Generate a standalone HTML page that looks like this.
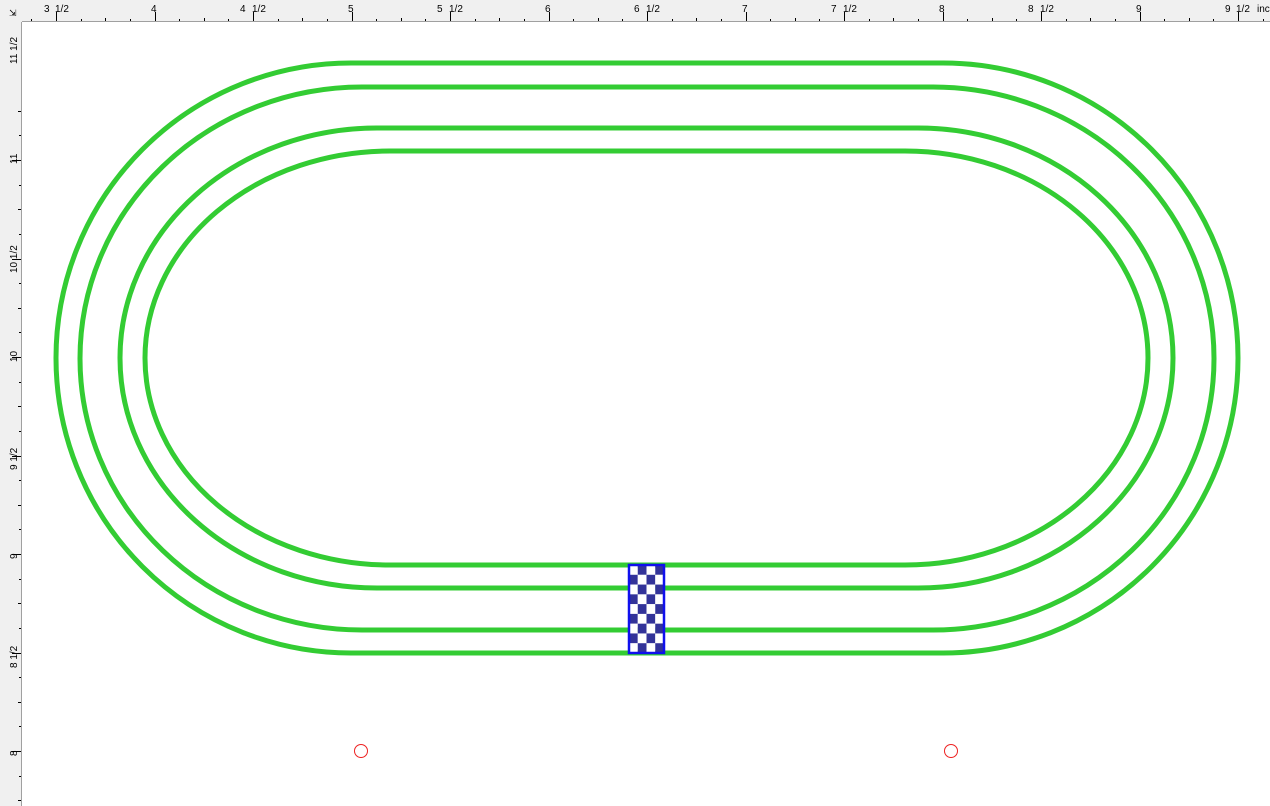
<!DOCTYPE html>
<html><head><meta charset="utf-8"><style>
html,body{margin:0;padding:0;width:1270px;height:806px;overflow:hidden;background:#fff;font-family:"Liberation Sans",sans-serif;}
svg{position:absolute;left:0;top:0}
</style></head><body>
<svg width="1270" height="806" viewBox="0 0 1270 806">
<rect x="0" y="0" width="1270" height="806" fill="#fff"/>
<!-- rulers -->
<rect x="0" y="0" width="1270" height="22" fill="#f0f0f0"/>
<rect x="0" y="0" width="22" height="806" fill="#f0f0f0"/>
<line x1="22" y1="21.5" x2="1270" y2="21.5" stroke="#a0a0a0"/>
<line x1="21.5" y1="22" x2="21.5" y2="806" stroke="#a0a0a0"/>
<g id="ticks" stroke="#000" stroke-width="1"></g>
<g font-size="10" fill="#000">
<text x="44" y="12">3</text><text x="55" y="12">1/2</text>
<text x="151" y="12">4</text>
<text x="240" y="12">4</text><text x="252" y="12">1/2</text>
<text x="348" y="12">5</text>
<text x="437" y="12">5</text><text x="449" y="12">1/2</text>
<text x="545" y="12">6</text>
<text x="634" y="12">6</text><text x="646" y="12">1/2</text>
<text x="742" y="12">7</text>
<text x="831" y="12">7</text><text x="843" y="12">1/2</text>
<text x="939" y="12">8</text>
<text x="1028" y="12">8</text><text x="1040" y="12">1/2</text>
<text x="1136" y="12">9</text>
<text x="1225" y="12">9</text><text x="1236" y="12">1/2</text>
<text x="1257" y="12">inc</text>
</g>
<g font-size="10" fill="#000">
<text transform="translate(17,64) rotate(-90)">11 1/2</text>
<text transform="translate(17,164) rotate(-90)">11</text>
<text transform="translate(17,273) rotate(-90)">10 1/2</text>
<text transform="translate(17,362) rotate(-90)">10</text>
<text transform="translate(17,470) rotate(-90)">9 1/2</text>
<text transform="translate(17,559) rotate(-90)">9</text>
<text transform="translate(17,668) rotate(-90)">8 1/2</text>
<text transform="translate(17,756) rotate(-90)">8</text>
</g>
<text x="9" y="16" font-size="9">⇲</text>
<!-- track -->
<g fill="none" stroke="#33cc33" stroke-width="5">
<path d="M351,63 H943 A295,295 0 0 1 943,653 H351 A295,295 0 0 1 351,63 Z"/>
<path d="M362,87 H933 A281,271.5 0 0 1 933,630 H362 A282,271.5 0 0 1 362,87 Z"/>
<path d="M377,128 H918 A255,230 0 0 1 918,588 H377 A257,230 0 0 1 377,128 Z"/>
<path d="M390,151 H905 A243,207 0 0 1 905,565 H390 A245,207 0 0 1 390,151 Z"/>
</g>
<!-- checker -->
<g id="chk"></g>
<rect x="629" y="565" width="35" height="88" fill="none" stroke="#1010ee" stroke-width="2.5"/>
<circle cx="361" cy="751" r="6.5" fill="none" stroke="#ee2222" stroke-width="1"/>
<circle cx="951" cy="751" r="6.5" fill="none" stroke="#ee2222" stroke-width="1"/>
</svg>
<script>
var ns="http://www.w3.org/2000/svg",t=document.getElementById("ticks"),ppi=197;
function L(x1,y1,x2,y2){var l=document.createElementNS(ns,"line");l.setAttribute("x1",x1);l.setAttribute("y1",y1);l.setAttribute("x2",x2);l.setAttribute("y2",y2);t.appendChild(l);}
for(var i=-40;i<120;i++){var x=Math.round(56+i*ppi/16)+0.5;if(x<24||x>1270)continue;var m=((i%16)+16)%16;var h=m%8==0?9:(m%4==0?3:(m%2==0?2:0));if(h)L(x,21,x,21-h);}
for(var i=-20;i<80;i++){var y=Math.round(357+i*ppi/16)+0.5;if(y<24||y>806)continue;var m=((i%16)+16)%16;var h=m%8==0?9:(m%4==0?3:(m%2==0?2:0));if(h)L(21,y,21-h,y);}
var c=document.getElementById("chk");
for(var r=0;r<9;r++)for(var k=0;k<4;k++){var e=document.createElementNS(ns,"rect");e.setAttribute("x",629+k*8.75);e.setAttribute("y",565+r*88/9);e.setAttribute("width",8.8);e.setAttribute("height",88/9+0.1);e.setAttribute("fill",(r+k)%2?"#333399":"#ffffff");c.appendChild(e);}
</script>
</body></html>
